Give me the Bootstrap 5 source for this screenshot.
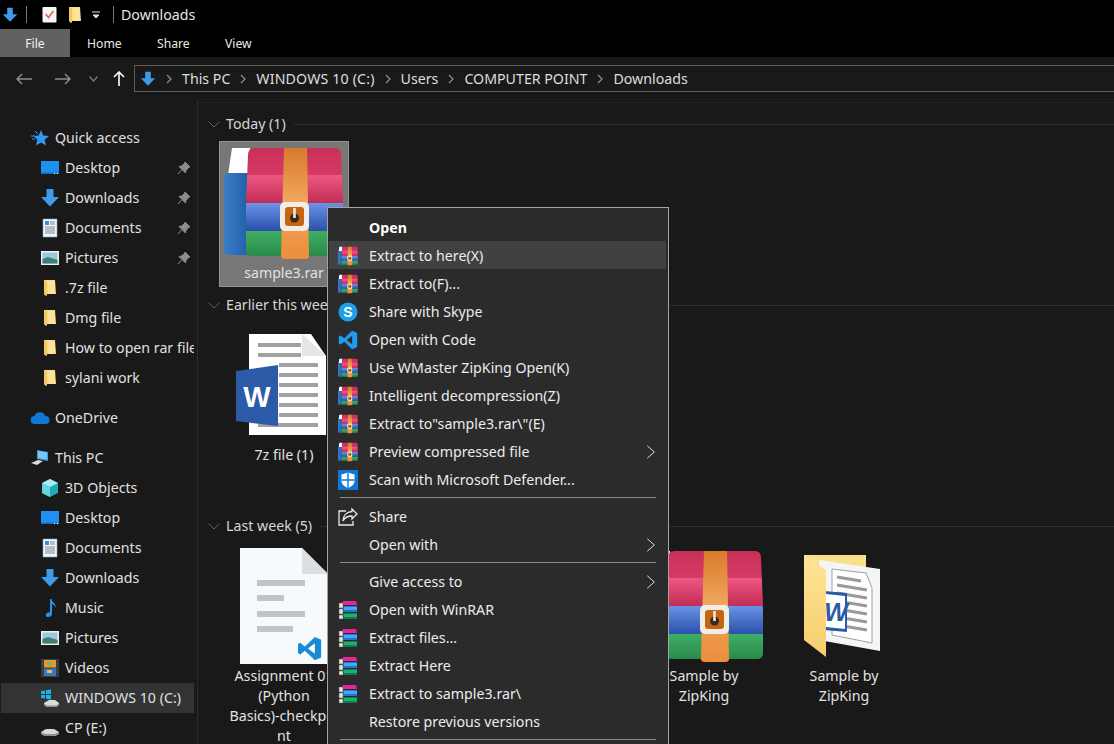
<!DOCTYPE html>
<html lang="en"><head><meta charset="utf-8"><title>Downloads</title>
<link href="https://cdn.jsdelivr.net/npm/bootstrap@5.3.0/dist/css/bootstrap.min.css" rel="stylesheet">
<style>
html,body{height:744px;overflow:hidden;background:#191919}
body{font-family:"Noto Sans","Open Sans",sans-serif;font-size:14.2px;color:#e6e6e6;position:relative}
.svg-defs{position:absolute;width:0;height:0}
.title-bar{height:29px;background:#000;padding-left:2px}
.title-sep{width:1px;height:17px;background:#777}
.sep-a{margin:0 15px 0 8px}.sep-b{margin:0 7px 0 13px}
.q-a{margin-right:8px}.q-b{margin-right:7px}
.ribbon{height:28px;background:#000;font-size:12.2px}
.rtab{height:28px;padding:2px 0 0 17px;color:#e8e8e8;width:70px}
.rtab-file{background:#616161;justify-content:center;padding-left:0;color:#f2f2f2}
.rtab-view{margin-left:-2px}
.addr-row{height:43px;background:#191919;padding-left:16px}
.addr-box{height:27px;flex:1;margin-left:9px;border:1px solid #5c5c5c;margin-right:-3px;padding-left:5px;white-space:nowrap;color:#dedede}
.crumb-sep{margin:0 10px;flex:none}
.caps-wide{letter-spacing:.15px}
.nav-a{margin-right:23px}.nav-b{margin-right:18px}.nav-c{margin-right:15px}
.main-area{height:644px;overflow:hidden}
.side-pane{width:198px;flex:none;padding-top:23px;border-right:1px solid #2b2b2b;overflow:hidden}
.side-row{height:30px;padding-left:40px;white-space:nowrap;position:relative;color:#e0e0e0;margin-right:3px}
.side-top{padding-left:30px}
.side-gap{margin-top:10px}
.side-sel{background:#333;margin-left:1px;padding-left:39px}
.side-ic{width:20px;height:20px;margin-right:5px;flex:none}
.pin-ic{position:absolute;left:177px;top:8px;width:14px;height:14px}
.side-clip{overflow:hidden}
.files{flex:1;padding:0 0 0 10px;overflow:hidden;min-width:0;border-top:1px solid #222;margin-top:2px}
.grp-head{height:22px;color:#d6d6d6;white-space:nowrap}
.grp-chev{margin-right:6px;flex:none}
.grp-line{height:1px;flex:1;background:#2e2e2e;margin-left:8px}
.g1{margin-top:10px}.g-next{margin-top:7px}.g-gap3{margin-top:46px}
.tiles{display:flex;gap:10px;padding-left:11px;margin-top:7px}
.tiles-first{margin-top:6px}
.tile{width:130px;height:146px;flex:none;text-align:center;line-height:20px;color:#e2e2e2;border:1px solid transparent}
.tile-sel{background:#777;border-color:#939393}
.tile-art{height:121px}
.art-rar{width:120px;height:112px}
.art-word{width:92px;height:102px;margin-right:4px}
.art-doc{width:88px;height:116px}
.art-fold{width:76px;height:102px;margin-right:4px}
.tile-tall{height:220px}
.ctx{display:block;position:absolute;left:327px;top:207px;width:342px;height:537px;background:#2b2b2b;border:1px solid #a3a3a3;border-bottom:0;border-radius:0;padding:5px 1px 0;margin:0;font-size:14.2px;overflow:hidden}
.ctx .dropdown-item{height:28px;padding:2px 0 0;display:flex;align-items:center;color:#ececec;width:337px}
.ctx .item-on{background:#414141}
.ctx .ctx-bold{font-weight:700;color:#fff}
.ctx-ic{width:20px;height:20px;margin:0 11px 0 9px;flex:none}
.ctx-chev{margin-left:auto;margin-right:10px}
.ctx .dropdown-divider{margin:4px 10px 4px 11px;border-top:1px solid #8a8a8a;opacity:1;width:316px}
.icon-w{font-family:"Liberation Sans",sans-serif;font-weight:700}
</style></head><body>

<svg class="svg-defs" xmlns="http://www.w3.org/2000/svg" aria-hidden="true">
<defs>
<linearGradient id="gr" x1="0" y1="0" x2="0" y2="1"><stop offset="0" stop-color="#c93058"/><stop offset=".48" stop-color="#d53a64"/><stop offset=".5" stop-color="#ee5880"/><stop offset="1" stop-color="#c22d55"/></linearGradient>
<linearGradient id="gb" x1="0" y1="0" x2="0" y2="1"><stop offset="0" stop-color="#6a94e6"/><stop offset="1" stop-color="#2a50ab"/></linearGradient>
<linearGradient id="gg" x1="0" y1="0" x2="0" y2="1"><stop offset="0" stop-color="#3fae65"/><stop offset="1" stop-color="#2a8a4a"/></linearGradient>
<linearGradient id="gs" x1="0" y1="0" x2="0" y2="1"><stop offset="0" stop-color="#d87a2c"/><stop offset=".48" stop-color="#f0a65e"/><stop offset="1" stop-color="#ec8d3c"/></linearGradient>
<linearGradient id="gbk" x1="0" y1="0" x2="1" y2="0"><stop offset="0" stop-color="#3b7cc6"/><stop offset="1" stop-color="#1f5ca6"/></linearGradient>
<linearGradient id="gfold" x1="0" y1="0" x2="0" y2="1"><stop offset="0" stop-color="#ffe596"/><stop offset="1" stop-color="#f5cd6c"/></linearGradient>
<symbol id="i-rar" viewBox="0 0 120 112">
<path d="M4 28 8 1h18l-2 27z" fill="#fff"/>
<rect x="0" y="26" width="27" height="82" rx="5" fill="url(#gbk)"/>
<path d="M24 8q0-7 7-7h80q6 0 6 7l2 48H22z" fill="url(#gr)"/>
<path d="M22 56h96q1 0 1 2v26H22z" fill="url(#gb)"/>
<path d="M22 84h97v19q0 6-6 6H28q-6 0-6-6z" fill="url(#gg)"/>
<path d="M60 1h23l2 108q0 3-4 3H61q-4 0-4-3z" fill="url(#gs)"/>
<rect x="56" y="55" width="29" height="29" rx="5" fill="#f2ede6"/>
<rect x="61" y="60" width="19" height="19" rx="3" fill="#c5650f"/>
<circle cx="70.500" cy="71" r="4.500" fill="#3a2a1e"/>
<rect x="69.200" y="61" width="2.600" height="10" fill="#efe6dc"/>
</symbol>
<symbol id="i-books" viewBox="0 0 20 20">
<path d="M1 6 5 1h13v4H5z" fill="#b0108a"/><path d="M5 1h13l1 4H5z" fill="#e0289c"/>
<path d="M2 6h17v6H2z" fill="#1f78d0"/><path d="M6 7h13v3H6z" fill="#4aa5ee"/>
<path d="M2 13h17v6H2z" fill="#0f7c52"/><path d="M6 14h13v3H6z" fill="#1eb070"/>
<path d="M1 3h4v5H1zM1 9h4v5H1zM1 15h4v4H1z" fill="#efe8d8" stroke="#444" stroke-width=".5"/>
</symbol>
<symbol id="i-down" viewBox="0 0 20 20"><path d="M6.500 1h7v8H19l-9 9.500L1 9h5.500z" fill="#3d9be9"/></symbol>
<symbol id="i-folder" viewBox="0 0 20 20"><path d="M4 2h11l1 14H7l-1 2-2-2z" fill="#fadc87"/><path d="M4 2l3 2v14l-3-2z" fill="#f3c863"/><path d="M8 3h7v13H8z" fill="#fde39a"/></symbol>
<symbol id="i-desk" viewBox="0 0 20 20"><rect x="1" y="3" width="18" height="13" fill="#1e90f0"/><rect x="1" y="14.500" width="18" height="1.500" fill="#0d6fc4"/><rect x="14" y="15" width="1" height="1" fill="#fff"/><rect x="17" y="15" width="1" height="1" fill="#fff"/></symbol>
<symbol id="i-docs" viewBox="0 0 20 20"><path d="M3 1h14v18H3z" fill="#f3f6f8" stroke="#9aa5ad" stroke-width=".6"/><path d="M5 3h4v4H5z" fill="#3b8fd8"/><path d="M10 4h5M10 6h5M5 9h10M5 11h10M5 13h10M5 15h10" stroke="#7d8a96" stroke-width="1"/></symbol>
<symbol id="i-pics" viewBox="0 0 20 20"><rect x="1" y="3" width="18" height="14" fill="#eef1f2"/><rect x="2.500" y="4.500" width="15" height="11" fill="#9cc7dc"/><path d="M2.500 11 8 9l9.500 3v3.500h-15z" fill="#3f7f72"/></symbol>
<symbol id="i-pin" viewBox="0 0 14 14"><path d="M8 1l5 5-1.500.5L9 9.500 8.500 12 2 5.500 4.500 5 7.500 2.500zM4.500 9 1 13" fill="#8d8d8d" stroke="#8d8d8d"/></symbol>
<symbol id="i-star" viewBox="0 0 20 20"><path d="M11 2l2.300 5.500 5.700.5-4.300 3.800 1.300 5.700-5-3-5 3 1.300-5.700L3.700 8l5-.5z" fill="#2f9af0"/><path d="M1 8h4M2 11h3M5 3l3 3" stroke="#2f9af0"/></symbol>
<symbol id="i-cloud" viewBox="0 0 20 20"><path d="M5 16a4 4 0 0 1-.7-8A6 6 0 0 1 15.500 8 4 4 0 0 1 15.500 16z" fill="#0f78d4"/></symbol>
<symbol id="i-pc" viewBox="0 0 20 20"><path d="M7 2l11 2v9L7 11z" fill="#3e9ae0"/><path d="M8 3l9 1.600v7L8 10z" fill="#7cc4f2"/><path d="M1 15l7-3 5 1-6 4z" fill="#d9d9d9"/></symbol>
<symbol id="i-3d" viewBox="0 0 20 20"><path d="M10 1l8 4v10l-8 4-8-4V5z" fill="#1fa9bd"/><path d="M10 1l8 4-8 4-8-4z" fill="#a7ecf0"/><path d="M2 5l8 4v10l-8-4z" fill="#63d4dd"/></symbol>
<symbol id="i-music" viewBox="0 0 20 20"><path d="M10 1h1.500c.5 4 5 4 4 9-.5-3-2.500-3.500-3.500-4v10c0 2-2 3-4 3s-3-2-1.500-3.500 2.500-1.500 3.500-1z" fill="#1f96e6"/></symbol>
<symbol id="i-video" viewBox="0 0 20 20"><rect x="1" y="1" width="18" height="18" fill="#3d3d3d"/><rect x="4" y="2" width="12" height="7.500" fill="#e09a3a"/><rect x="4" y="10.500" width="12" height="7.500" fill="#3b76c4"/><rect x="7" y="4" width="5" height="3" fill="#79b84a"/><rect x="7" y="12" width="5" height="3" fill="#e8c24a"/></symbol>
<symbol id="i-drive" viewBox="0 0 20 20"><path d="M1 14l5-3h8l5 3v2l-4 2H5l-4-2z" fill="#d8d8d8"/><path d="M1 14l4 2h10l4-2v2l-4 2H5l-4-2z" fill="#8f8f8f"/></symbol>
<symbol id="i-win" viewBox="0 0 20 20"><path d="M1 3l4-.6V6H1zM6 2.300l5-.8V6H6zM1 7h4v3.500l-4-.5zM6 7h5v4.500l-5-.7z" fill="#19b4e8"/><path d="M4 15l5-3h6l4 3v2l-3 2H7l-3-2z" fill="#dcdcdc"/><path d="M4 15.500l3 2h9l3-2V17l-3 2H7l-3-2z" fill="#909090"/></symbol>
<symbol id="i-code" viewBox="0 0 24 24"><path fill-rule="evenodd" d="M17 1 7.500 10 3 6.500 1 7.500v9l2 1L7.500 14l9.500 9 6-2.500v-17zM17 7v10l-6.500-5z" fill="#1f9cf0"/></symbol>
<symbol id="i-def" viewBox="0 0 20 20"><rect width="20" height="20" fill="#0f78d4"/><path d="M10 2.500l6.500 2v6c0 4-3 6-6.500 7.500C6.500 16.500 3.500 14.500 3.500 10.500v-6z" fill="#fff"/><path d="M9.300 2.500h1.400v15.500H9.300zM3.500 9.300h13v1.400h-13z" fill="#0f78d4"/></symbol>
<symbol id="i-share" viewBox="0 0 20 20"><path d="M14 2l5 5-5 5V9C9 9 6.500 11 5 14c0-5 3-9 9-9.500zM8 4H1v14h14v-4" fill="none" stroke="#e8e8e8" stroke-width="1.300"/></symbol>
<symbol id="i-chev-r" viewBox="0 0 12 18"><path d="M1.500 1.500 10 9l-8.500 7.500" fill="none" stroke="#dcdcdc" stroke-width="1.200"/></symbol>
<symbol id="i-crumb" viewBox="0 0 6 10"><path d="M1 1l4 4-4 4" fill="none" stroke="#8c8c8c" stroke-width="1.300"/></symbol>
<symbol id="i-grp" viewBox="0 0 12 7"><path d="M.5.500 6 6 11.500.500" fill="none" stroke="#5f5f5f"/></symbol>
<symbol id="i-wordicon" viewBox="0 0 92 102">
<path d="M13 0h62l15 22v79H13z" fill="#fff"/><path d="M66 0l24 22H66z" fill="#e6e6e6"/>
<path d="M22 9h43v4H22zM22 19h43v4H22zM43 29h39v4H43zM43 39h39v4H43zM43 49h39v4H43zM43 59h39v4H43zM43 69h39v4H43zM43 79h39v4H43zM22 89h60v4H22z" fill="#a1a1a1"/>
<path d="M0 37 42 31V92L0 87z" fill="#2b5aa6"/>
<text class="icon-w" x="21" y="73" text-anchor="middle" fill="#fff" font-size="29">W</text>
</symbol>
<symbol id="i-docicon" viewBox="0 0 88 116">
<path d="M0 0h62l26 26v90H0z" fill="#f7fafc"/><path d="M62 0l26 26H62z" fill="#dcdfe2"/>
<path d="M17 32h48v6H17zM17 47h27v6H17zM17 63h48v6H17zM17 78h36v6H17z" fill="#c4c4c4"/>
<g transform="translate(57 88) scale(1.050)"><path fill-rule="evenodd" d="M17 1 7.500 10 3 6.500 1 7.500v9l2 1L7.500 14l9.500 9 6-2.500v-17zM17 7v10l-6.500-5z" fill="#1a8ad4"/></g>
</symbol>
<symbol id="i-foldword" viewBox="0 0 76 102">
<path d="M0 0h62v20H0z" fill="#fbe08c"/>
<path d="M15 5 76 14 76 96 15 85z" fill="#f4f5f7"/>
<path d="M28 14 62 18 68 33V88L28 80z" fill="#fff" stroke="#9aa0a8"/>
<path d="M33 22l24 4M33 30l30 5M33 38l30 5M33 46l30 5M33 54l30 5M33 62l30 5M33 70l30 5" stroke="#9a9a9a" stroke-width="3"/>
<path d="M20 36 43 38V77L20 75z" fill="#2b5aa6"/><path d="M22 39 41 41V74L22 72z" fill="#fff"/>
<text class="icon-w" x="32" y="66" text-anchor="middle" fill="#2b5aa6" font-size="25" font-style="italic">W</text>
<path d="M0 0 22 15V102L0 85z" fill="url(#gfold)"/>
</symbol>
</defs></svg>

<div class="title-bar d-flex align-items-center">
<svg width="16" height="18"><use href="#i-down"/></svg>
<span class="title-sep sep-a"></span>
<svg class="q-a" width="15" height="17" viewBox="0 0 15 17"><rect x=".5" y="1" width="14" height="15.500" fill="#f6f6f6" rx="1"/><path d="M3.500 8l3 3.500L11.500 5" fill="none" stroke="#e0653a" stroke-width="1.600"/></svg>
<svg class="q-b" width="20" height="20"><use href="#i-folder"/></svg>
<svg width="8" height="8" viewBox="0 0 8 8"><path d="M0 1h8M1 4h6L4 7z" stroke="#ddd" fill="#ddd"/></svg>
<span class="title-sep sep-b"></span>
<span>Downloads</span>
</div>

<div class="ribbon d-flex">
<div class="rtab rtab-file d-flex align-items-center">File</div>
<div class="rtab d-flex align-items-center">Home</div>
<div class="rtab d-flex align-items-center">Share</div>
<div class="rtab rtab-view d-flex align-items-center">View</div>
</div>

<div class="addr-row d-flex align-items-center">
<svg class="nav-a" width="16" height="12" viewBox="0 0 16 12"><path d="M16 6H1M6 1 1 6l5 5" fill="none" stroke="#8c8c8c" stroke-width="1.500"/></svg>
<svg class="nav-b" width="16" height="12" viewBox="0 0 16 12"><path d="M0 6h15M10 1l5 5-5 5" fill="none" stroke="#8c8c8c" stroke-width="1.500"/></svg>
<svg class="nav-c" width="9" height="6" viewBox="0 0 9 6"><path d="M.5.500 4.500 5l4-4.500" fill="none" stroke="#777" stroke-width="1.400"/></svg>
<svg width="12" height="15" viewBox="0 0 12 15"><path d="M6 15V1M1 6l5-5 5 5" fill="none" stroke="#fff" stroke-width="1.600"/></svg>
<div class="addr-box d-flex align-items-center">
<svg width="16" height="16"><use href="#i-down"/></svg>
<svg class="crumb-sep" width="6" height="10"><use href="#i-crumb"/></svg><span>This PC</span>
<svg class="crumb-sep" width="6" height="10"><use href="#i-crumb"/></svg><span class="caps-wide">WINDOWS 10 (C:)</span>
<svg class="crumb-sep" width="6" height="10"><use href="#i-crumb"/></svg><span>Users</span>
<svg class="crumb-sep" width="6" height="10"><use href="#i-crumb"/></svg><span>COMPUTER POINT</span>
<svg class="crumb-sep" width="6" height="10"><use href="#i-crumb"/></svg><span>Downloads</span>
</div>
</div>

<div class="main-area d-flex">
<nav class="side-pane">
<div class="side-row side-top d-flex align-items-center"><svg class="side-ic"><use href="#i-star"/></svg>Quick access</div>
<div class="side-row d-flex align-items-center"><svg class="side-ic"><use href="#i-desk"/></svg>Desktop<svg class="pin-ic"><use href="#i-pin"/></svg></div>
<div class="side-row d-flex align-items-center"><svg class="side-ic"><use href="#i-down"/></svg>Downloads<svg class="pin-ic"><use href="#i-pin"/></svg></div>
<div class="side-row d-flex align-items-center"><svg class="side-ic"><use href="#i-docs"/></svg>Documents<svg class="pin-ic"><use href="#i-pin"/></svg></div>
<div class="side-row d-flex align-items-center"><svg class="side-ic"><use href="#i-pics"/></svg>Pictures<svg class="pin-ic"><use href="#i-pin"/></svg></div>
<div class="side-row d-flex align-items-center"><svg class="side-ic"><use href="#i-folder"/></svg>.7z file</div>
<div class="side-row d-flex align-items-center"><svg class="side-ic"><use href="#i-folder"/></svg>Dmg file</div>
<div class="side-row d-flex align-items-center side-clip"><svg class="side-ic"><use href="#i-folder"/></svg>How to open rar files</div>
<div class="side-row d-flex align-items-center"><svg class="side-ic"><use href="#i-folder"/></svg>sylani work</div>
<div class="side-row side-top side-gap d-flex align-items-center"><svg class="side-ic"><use href="#i-cloud"/></svg>OneDrive</div>
<div class="side-row side-top side-gap d-flex align-items-center"><svg class="side-ic"><use href="#i-pc"/></svg>This PC</div>
<div class="side-row d-flex align-items-center"><svg class="side-ic"><use href="#i-3d"/></svg>3D Objects</div>
<div class="side-row d-flex align-items-center"><svg class="side-ic"><use href="#i-desk"/></svg>Desktop</div>
<div class="side-row d-flex align-items-center"><svg class="side-ic"><use href="#i-docs"/></svg>Documents</div>
<div class="side-row d-flex align-items-center"><svg class="side-ic"><use href="#i-down"/></svg>Downloads</div>
<div class="side-row d-flex align-items-center"><svg class="side-ic"><use href="#i-music"/></svg>Music</div>
<div class="side-row d-flex align-items-center"><svg class="side-ic"><use href="#i-pics"/></svg>Pictures</div>
<div class="side-row d-flex align-items-center"><svg class="side-ic"><use href="#i-video"/></svg>Videos</div>
<div class="side-row side-sel d-flex align-items-center"><svg class="side-ic"><use href="#i-win"/></svg>WINDOWS 10 (C:)</div>
<div class="side-row d-flex align-items-center"><svg class="side-ic"><use href="#i-drive"/></svg>CP (E:)</div>
</nav>
<section class="files">
<div class="grp-head g1 d-flex align-items-center"><svg class="grp-chev" width="12" height="7"><use href="#i-grp"/></svg>Today (1)<span class="grp-line"></span></div>
<div class="tiles tiles-first">
<div class="tile tile-sel"><div class="tile-art d-flex align-items-center justify-content-center"><svg class="art-rar"><use href="#i-rar"/></svg></div>sample3.rar</div>
</div>
<div class="grp-head g-next d-flex align-items-center"><svg class="grp-chev" width="12" height="7"><use href="#i-grp"/></svg>Earlier this week (1)<span class="grp-line"></span></div>
<div class="tiles">
<div class="tile"><div class="tile-art d-flex align-items-center justify-content-center"><svg class="art-word"><use href="#i-wordicon"/></svg></div>7z file (1)</div>
</div>
<div class="grp-head g-gap3 d-flex align-items-center"><svg class="grp-chev" width="12" height="7"><use href="#i-grp"/></svg>Last week (5)<span class="grp-line"></span></div>
<div class="tiles">
<div class="tile tile-tall"><div class="tile-art d-flex align-items-center justify-content-center"><svg class="art-doc"><use href="#i-docicon"/></svg></div>Assignment 01<br>(Python<br>Basics)-checkpoi<br>nt</div>
<div class="tile"></div>
<div class="tile"></div>
<div class="tile"><div class="tile-art d-flex align-items-center justify-content-center"><svg class="art-rar"><use href="#i-rar"/></svg></div>Sample by<br>ZipKing</div>
<div class="tile"><div class="tile-art d-flex align-items-center justify-content-center"><svg class="art-fold"><use href="#i-foldword"/></svg></div>Sample by<br>ZipKing</div>
</div>
</section>
</div>

<div class="dropdown-menu show ctx">
<div class="dropdown-item ctx-bold"><span class="ctx-ic"></span>Open</div>
<div class="dropdown-item item-on"><svg class="ctx-ic"><use href="#i-rar"/></svg>Extract to here(X)</div>
<div class="dropdown-item"><svg class="ctx-ic"><use href="#i-rar"/></svg>Extract to(F)...</div>
<div class="dropdown-item"><svg class="ctx-ic" viewBox="0 0 20 20"><circle cx="10" cy="10" r="9.500" fill="#1da1e8"/><text x="10" y="15" text-anchor="middle" fill="#fff" font-family="Liberation Sans" font-weight="700" font-size="14">S</text></svg>Share with Skype</div>
<div class="dropdown-item"><svg class="ctx-ic"><use href="#i-code"/></svg>Open with Code</div>
<div class="dropdown-item"><svg class="ctx-ic"><use href="#i-rar"/></svg>Use WMaster ZipKing Open(K)</div>
<div class="dropdown-item"><svg class="ctx-ic"><use href="#i-rar"/></svg>Intelligent decompression(Z)</div>
<div class="dropdown-item"><svg class="ctx-ic"><use href="#i-rar"/></svg>Extract to"sample3.rar\"(E)</div>
<div class="dropdown-item"><svg class="ctx-ic"><use href="#i-rar"/></svg>Preview compressed file<svg class="ctx-chev" width="10" height="16"><use href="#i-chev-r"/></svg></div>
<div class="dropdown-item"><svg class="ctx-ic"><use href="#i-def"/></svg>Scan with Microsoft Defender...</div>
<hr class="dropdown-divider">
<div class="dropdown-item"><svg class="ctx-ic"><use href="#i-share"/></svg>Share</div>
<div class="dropdown-item"><span class="ctx-ic"></span>Open with<svg class="ctx-chev" width="10" height="16"><use href="#i-chev-r"/></svg></div>
<hr class="dropdown-divider">
<div class="dropdown-item"><span class="ctx-ic"></span>Give access to<svg class="ctx-chev" width="10" height="16"><use href="#i-chev-r"/></svg></div>
<div class="dropdown-item"><svg class="ctx-ic"><use href="#i-books"/></svg>Open with WinRAR</div>
<div class="dropdown-item"><svg class="ctx-ic"><use href="#i-books"/></svg>Extract files...</div>
<div class="dropdown-item"><svg class="ctx-ic"><use href="#i-books"/></svg>Extract Here</div>
<div class="dropdown-item"><svg class="ctx-ic"><use href="#i-books"/></svg>Extract to sample3.rar\</div>
<div class="dropdown-item"><span class="ctx-ic"></span>Restore previous versions</div>
<hr class="dropdown-divider">
</div>
<script src="https://cdn.jsdelivr.net/npm/bootstrap@5.3.0/dist/js/bootstrap.bundle.min.js"></script>
</body></html>
